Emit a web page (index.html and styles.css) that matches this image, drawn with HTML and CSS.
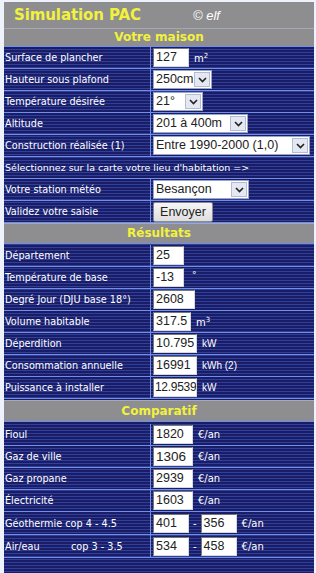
FILE: index.html
```html
<!DOCTYPE html>
<html lang="fr">
<head>
<meta charset="utf-8">
<title>Simulation PAC</title>
<link rel="stylesheet" href="styles.css">
</head>
<body>
<div class="sim">
  <div class="top">
    <div class="title">Simulation PAC</div>
    <div class="copy">© elf</div>
  </div>
  <div class="section">Votre maison</div>

  <div class="row"><div class="lab">Surface de plancher</div><div class="val"><span class="inp w36">127</span><span class="unit">m<sup>2</sup></span></div></div>
  <div class="row"><div class="lab">Hauteur sous plafond</div><div class="val"><span class="sel w59"><span class="st">250cm</span><span class="arr"><svg width="9" height="6" viewBox="0 0 9 6"><path d="M1 1 L4.5 4.5 L8 1" fill="none" stroke="#222" stroke-width="1.6"/></svg></span></span></div></div>
  <div class="row"><div class="lab">Température désirée</div><div class="val"><span class="sel w50"><span class="st">21°</span><span class="arr"><svg width="9" height="6" viewBox="0 0 9 6"><path d="M1 1 L4.5 4.5 L8 1" fill="none" stroke="#222" stroke-width="1.6"/></svg></span></span></div></div>
  <div class="row"><div class="lab">Altitude</div><div class="val"><span class="sel w95"><span class="st">201 à 400m</span><span class="arr"><svg width="9" height="6" viewBox="0 0 9 6"><path d="M1 1 L4.5 4.5 L8 1" fill="none" stroke="#222" stroke-width="1.6"/></svg></span></span></div></div>
  <div class="row"><div class="lab">Construction réalisée (1)</div><div class="val"><span class="sel w157"><span class="st">Entre 1990-2000 (1,0)</span><span class="arr"><svg width="9" height="6" viewBox="0 0 9 6"><path d="M1 1 L4.5 4.5 L8 1" fill="none" stroke="#222" stroke-width="1.6"/></svg></span></span></div></div>
  <div class="row full"><div class="lab">Sélectionnez sur la carte votre lieu d'habitation =&gt;</div></div>
  <div class="row"><div class="lab">Votre station météo</div><div class="val"><span class="sel w96"><span class="st">Besançon</span><span class="arr"><svg width="9" height="6" viewBox="0 0 9 6"><path d="M1 1 L4.5 4.5 L8 1" fill="none" stroke="#222" stroke-width="1.6"/></svg></span></span></div></div>
  <div class="row"><div class="lab">Validez votre saisie</div><div class="val"><span class="btn">Envoyer</span></div></div>

  <div class="section tall">Résultats</div>
  <div class="row"><div class="lab">Département</div><div class="val"><span class="inp w30">25</span></div></div>
  <div class="row"><div class="lab">Température de base</div><div class="val"><span class="inp w30">-13</span><span class="unit deg">°</span></div></div>
  <div class="row"><div class="lab">Degré Jour (DJU base 18°)</div><div class="val"><span class="inp w41">2608</span></div></div>
  <div class="row"><div class="lab">Volume habitable</div><div class="val"><span class="inp w37">317.5</span><span class="unit">m<sup>3</sup></span></div></div>
  <div class="row"><div class="lab">Déperdition</div><div class="val"><span class="inp w44">10.795</span><span class="unit ar">kW</span></div></div>
  <div class="row"><div class="lab">Consommation annuelle</div><div class="val"><span class="inp w44">16991</span><span class="unit ar">kWh (2)</span></div></div>
  <div class="row"><div class="lab">Puissance à installer</div><div class="val"><span class="inp w44 clip">12.9539</span><span class="unit ar">kW</span></div></div>

  <div class="section tall2">Comparatif</div>
  <div class="row"><div class="lab">Fioul</div><div class="val"><span class="inp w40">1820</span><span class="unit">€/an</span></div></div>
  <div class="row"><div class="lab">Gaz de ville</div><div class="val"><span class="inp w40 big">1306</span><span class="unit">€/an</span></div></div>
  <div class="row"><div class="lab">Gaz propane</div><div class="val"><span class="inp w40">2939</span><span class="unit">€/an</span></div></div>
  <div class="row"><div class="lab">Électricité</div><div class="val"><span class="inp w40">1603</span><span class="unit">€/an</span></div></div>
  <div class="row high"><div class="lab">Géothermie cop 4 - 4.5</div><div class="val"><span class="inp w36">401</span><span class="dash">-</span><span class="inp w36">356</span><span class="unit">€/an</span></div></div>
  <div class="row high"><div class="lab"><span class="air">Air/eau</span>cop 3 - 3.5</div><div class="val"><span class="inp w36">534</span><span class="dash">-</span><span class="inp w36">458</span><span class="unit">€/an</span></div></div>
  <div class="tail"></div>
</div>
</body>
</html>
```

FILE: styles.css
```css
html, body {
  margin: 0;
  padding: 0;
}
body {
  background: #eef2fa;
  padding: 2px 2px 0 4px;
  font-family: "DejaVu Sans", Verdana, sans-serif;
}
.sim {
  width: 310px;
  background: repeating-linear-gradient(to bottom, #191c66 0 2px, #313f96 2px 3px);
}
.top {
  display: grid;
  grid-template-columns: 189px 1fr;
  align-items: center;
  height: 26px;
  background: #8e8e90;
}
.title {
  padding-left: 10px;
  color: #f2f23c;
  font-weight: bold;
  font-size: 15px;
  letter-spacing: -0.1px;
}
.copy {
  color: #ffffff;
  font-style: italic;
  font-size: 13px;
  font-family: "Liberation Sans", Arial, sans-serif;
}
.section {
  height: 17px;
  line-height: 17px;
  text-align: center;
  background: #8e8e90;
  color: #f2f23c;
  font-weight: bold;
  font-size: 12px;
  border-top: 1px solid #a8a8b4;
  border-bottom: 1px solid #6f8fe8;
}
.section.tall {
  height: 19px;
  line-height: 19px;
  margin-bottom: 1px;
}
.section.tall2 {
  height: 20px;
  line-height: 20px;
  margin-top: 1px;
  margin-bottom: 2px;
}
.row {
  display: grid;
  grid-template-columns: 147px 1fr;
  height: 21px;
  border-bottom: 1px solid #6f8fe8;
}
.row.high {
  height: 22px;
}
.row.full {
  grid-template-columns: 1fr;
}
.lab {
  display: flex;
  align-items: center;
  padding-left: 1px;
  color: #ffffff;
  font-size: 9.7px;
  border-right: 1px solid #6f8fe8;
  white-space: nowrap;
  overflow: hidden;
}
.row.full .lab {
  border-right: none;
  font-size: 9.5px;
}
.air {
  width: 66px;
}
.val {
  display: flex;
  align-items: center;
  padding-left: 2px;
  gap: 4px;
}
.inp {
  box-sizing: border-box;
  height: 19px;
  line-height: 17px;
  background: #ffffff;
  border: 1px solid;
  border-color: #777 #d8d8d8 #d8d8d8 #777;
  color: #222;
  font-family: "Liberation Sans", Arial, sans-serif;
  font-size: 12.5px;
  padding-left: 2px;
  white-space: nowrap;
  overflow: hidden;
}
.inp.big {
  font-size: 13.5px;
}
.inp.clip {
  letter-spacing: -0.3px;
  padding-left: 1px;
  font-size: 12px;
}
.w30 { width: 31px; }
.w36 { width: 36px; }
.w37 { width: 38px; }
.w40 { width: 40px; }
.w41 { width: 42px; }
.w44 { width: 44px; }
.unit {
  color: #ffffff;
  font-size: 10px;
  margin-left: 1px;
}
.unit sup {
  font-size: 7px;
  vertical-align: 4px;
}
.unit.deg {
  margin-left: 4px;
  font-size: 9px;
  align-self: flex-start;
  margin-top: 3px;
}
.unit.ar {
  font-family: "Liberation Sans", Arial, sans-serif;
  font-size: 10px;
}
.dash {
  color: #fff;
  font-size: 10px;
}
.sel {
  box-sizing: border-box;
  height: 19px;
  display: flex;
  align-items: stretch;
  background: #ffffff;
  border: 1px solid #9aa4c4;
  color: #222;
  font-family: "Liberation Sans", Arial, sans-serif;
  font-size: 12.5px;
}
.st {
  flex: 1;
  padding-left: 2px;
  line-height: 17px;
  white-space: nowrap;
  overflow: hidden;
}
.arr {
  width: 16px;
  margin: 1px;
  display: flex;
  align-items: center;
  justify-content: center;
  background: #e4e8f2;
  border: 1px solid #b4bcd4;
  box-sizing: border-box;
}
.w59 { width: 59px; }
.w50 { width: 50px; }
.w95 { width: 95px; }
.w96 { width: 96px; }
.w157 { width: 157px; }
.btn {
  box-sizing: border-box;
  width: 60px;
  height: 20px;
  line-height: 18px;
  text-align: center;
  background: linear-gradient(#f6f6f6, #dedede);
  border: 1px solid #8a8a8a;
  border-radius: 2px;
  color: #222;
  font-family: "Liberation Sans", Arial, sans-serif;
  font-size: 12.5px;
}
.tail {
  height: 30px;
}
```
